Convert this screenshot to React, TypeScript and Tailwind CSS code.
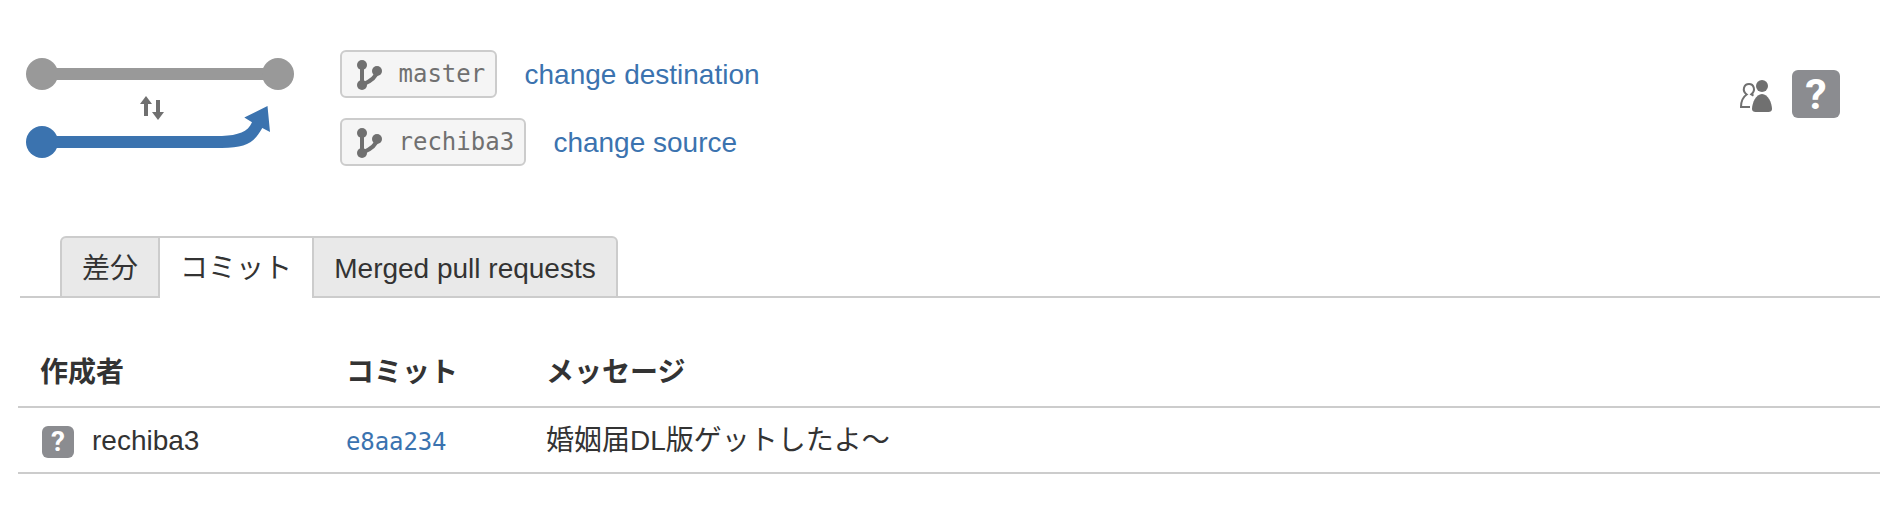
import type { ReactNode } from 'react';

type Commit = {
  hash: string;
  author: string;
  message: string;
};

const commits: Commit[] = [
  { hash: 'e8aa234', author: 'rechiba3', message: '婚姻届DL版ゲットしたよ〜' },
];

function BranchGraph() {
  return (
    <svg className="shrink-0" width="272" height="108" viewBox="24 54 272 108">
      {/* Destination */}
      <g fill="#999999">
        <circle cx="42" cy="74" r="16" />
        <rect x="42" y="68" width="236" height="12" />
        <circle cx="278" cy="74" r="16" />
      </g>

      {/* Swap */}
      <g fill="#707070">
        <path d="M146 96l6 8h-4v12h-4v-12h-4z" />
        <path d="M158 120l-6-8h4v-12h4v12h4z" />
      </g>

      {/* Source */}
      <g fill="#3b73af">
        <circle cx="42" cy="142" r="16" />
        <path d="M42 136H222C238 135.300 248 132 252 122.300L244.300 117.500L267.500 106L270 132L262.300 128C254 143 246 147.700 222 148H42z" />
      </g>
    </svg>
  );
}

function BranchIcon() {
  return (
    <svg className="shrink-0" width="26" height="32" viewBox="0 0 26 32">
      <g fill="#707070">
        <circle cx="5" cy="7" r="5" />
        <circle cx="5" cy="27" r="5" />
        <circle cx="20" cy="13" r="5" />
      </g>
      <path d="M5 7v20" fill="none" stroke="#707070" strokeWidth="4" />
      <path d="M20 14c-1 5-6 9-14 12.500" fill="none" stroke="#707070" strokeWidth="4" />
    </svg>
  );
}

function ReviewersIcon() {
  return (
    <svg className="mt-1 shrink-0" width="32" height="32" viewBox="0 0 32 32">
      <path
        d="M10 27H1C1 21 3 17 6.700 14.500C1.500 10.500 4 4 9 4C14 4 16 10.500 11.300 14.300L13.500 15.700"
        fill="none"
        stroke="#707070"
        strokeWidth="2"
      />
      <circle cx="22" cy="6" r="6" fill="#707070" />
      <path d="M22 14c6 0 10 9 10 15 0 2-1.500 3-3.500 3h-13c-2 0-3.500-1-3.500-3 0-6 4-15 10-15z" fill="#707070" />
    </svg>
  );
}

function BranchRow({ name, action }: { name: string; action: string }) {
  return (
    <div className="flex h-12 items-center">
      <span className="flex h-12 items-center rounded-md border-2 border-[#cccccc] bg-[#f5f5f5] pr-[9.8px] pl-[15px] text-[#707070]">
        <BranchIcon />
        <span className="ml-[15.5px] font-['DejaVu_Sans_Mono',monospace] text-2xl leading-7">{name}</span>
      </span>
      <a href="#" className="ml-[27.5px] pt-0.5 text-[28px] leading-8 text-[#3b73af]">
        {action}
      </a>
    </div>
  );
}

function Tab({ className, children }: { className: string; children: ReactNode }) {
  return (
    <button type="button" className={`h-[62px] border-t-2 border-[#cccccc] text-[28px] leading-8 whitespace-nowrap ${className}`}>
      {children}
    </button>
  );
}

export default function App() {
  return (
    <div className="h-[508px] w-full overflow-hidden bg-white font-['Liberation_Sans','Noto_Sans_CJK_JP',sans-serif] text-[#333333]">
      <header className="flex h-[236px] items-start pt-[50px] pr-10 pl-6">
        <div className="pt-1">
          <BranchGraph />
        </div>
        <div className="ml-11 flex flex-col gap-5">
          <BranchRow name="master" action="change destination" />
          <BranchRow name="rechiba3" action="change source" />
        </div>
        <div className="mt-5 ml-auto flex items-center gap-5">
          <ReviewersIcon />
          <span className="flex size-12 items-center justify-center rounded-md bg-[#8b8c90] font-['Roboto',sans-serif] text-[43px] leading-none font-bold text-white">?</span>
        </div>
      </header>

      <nav className="ml-5 flex h-[62px]">
        <div className="w-10 border-b-2 border-[#cccccc]" />
        <Tab className="w-[100px] rounded-tl-md border-r-2 border-b-2 border-l-2 bg-[#e9e9e9] pt-1">差分</Tab>
        <Tab className="w-[152px] bg-white pt-0.5">コミット</Tab>
        <Tab className="w-[306px] rounded-tr-md border-r-2 border-b-2 border-l-2 bg-[#e9e9e9] pt-1">Merged pull requests</Tab>
        <div className="flex-1 border-b-2 border-[#cccccc]" />
      </nav>

      <div className="ml-[18px] pt-[38px] text-[28px] leading-8">
        <div className="flex h-[72px] items-center border-b-2 border-[#cccccc] pt-[3px] pl-[22px] font-bold">
          <div className="w-[306px]">作成者</div>
          <div className="w-[200px]">コミット</div>
          <div>メッセージ</div>
        </div>
        {commits.map((commit) => (
          <div key={commit.hash} className="flex h-[66px] items-center border-b-2 border-[#cccccc] pl-6">
            <div className="flex w-[304px] items-center">
              <span className="mt-1 mr-[18px] flex size-8 items-center justify-center rounded-md bg-[#8b8c90] font-['Roboto',sans-serif] text-[28px] leading-none font-bold text-white">?</span>
              <span className="pt-0.5">{commit.author}</span>
            </div>
            <a href="#" className="w-[200px] pt-1 font-['DejaVu_Sans_Mono',monospace] text-2xl tracking-[-0.1px] text-[#3b73af]">
              {commit.hash}
            </a>
            <div className="pt-0.5">{commit.message}</div>
          </div>
        ))}
      </div>
    </div>
  );
}
